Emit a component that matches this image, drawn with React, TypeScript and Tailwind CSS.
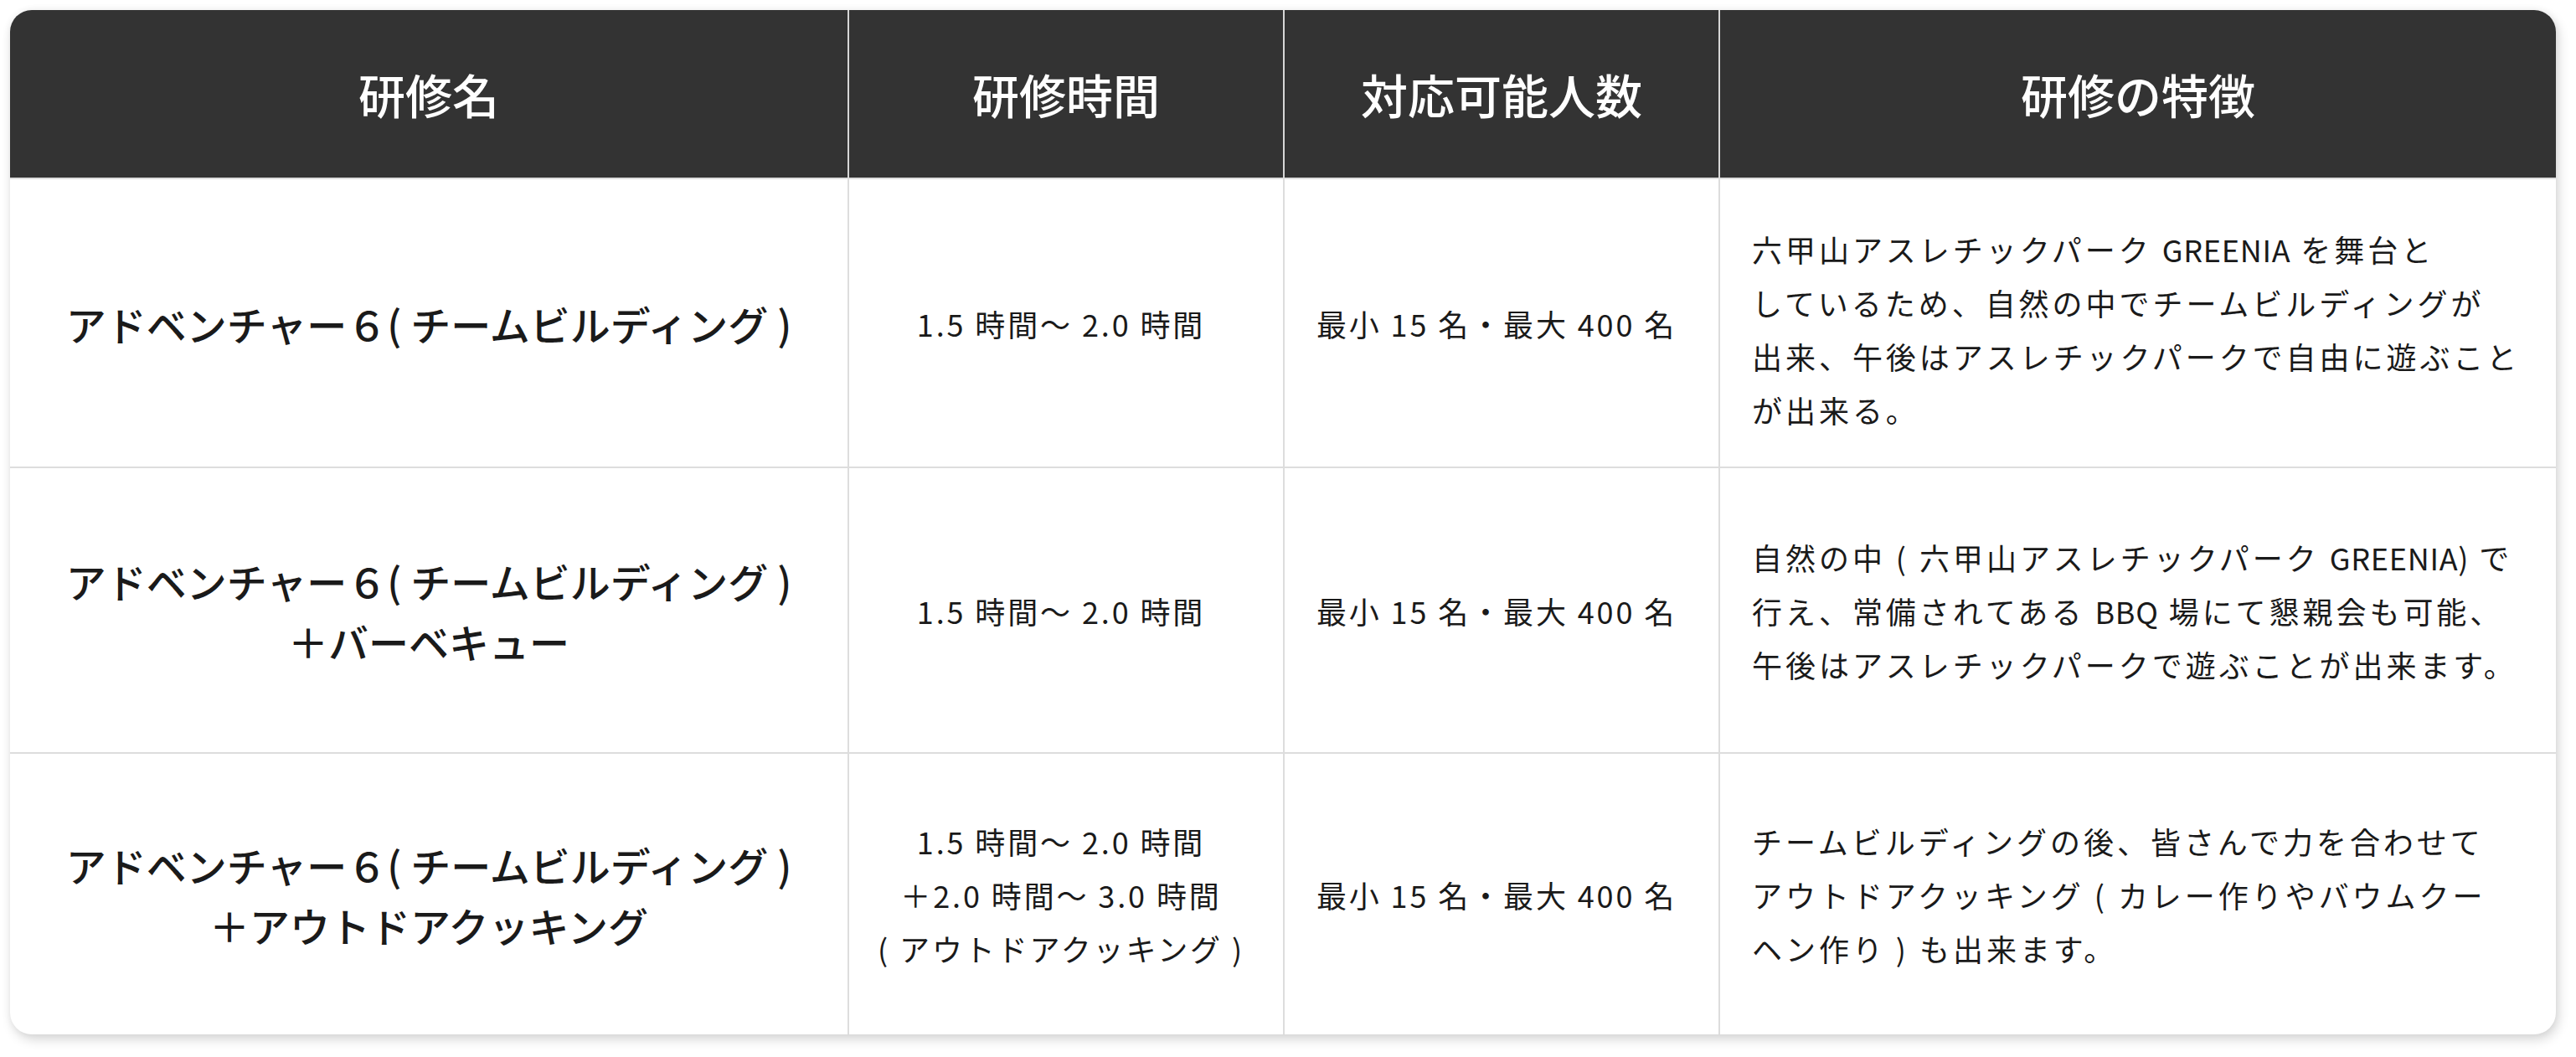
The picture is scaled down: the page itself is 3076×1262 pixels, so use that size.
import React from "react";

type Row = {
  name: string[];
  time: string[];
  capacity: string;
  feature: React.ReactNode[];
  height: string;
  featurePad?: string;
};

// 英字部分は字間を詰める
function L({ children }: { children: React.ReactNode }) {
  return <span className="tracking-[0.02em]">{children}</span>;
}

const rows: Row[] = [
  {
    name: ["アドベンチャー６( チームビルディング )"],
    time: ["1.5 時間〜 2.0 時間"],
    capacity: "最小 15 名・最大 400 名",
    feature: [
      <>
        六甲山アスレチックパーク <L>GREENIA</L> を舞台と
      </>,
      "しているため、自然の中でチームビルディングが",
      "出来、午後はアスレチックパークで自由に遊ぶこと",
      "が出来る。",
    ],
    height: "h-[345px]",
    featurePad: "pt-[14px]",
  },
  {
    name: ["アドベンチャー６( チームビルディング )", "＋バーベキュー"],
    time: ["1.5 時間〜 2.0 時間"],
    capacity: "最小 15 名・最大 400 名",
    feature: [
      <>
        自然の中 ( 六甲山アスレチックパーク <L>GREENIA)</L> で
      </>,
      <>
        行え、常備されてある <L>BBQ</L> 場にて懇親会も可能、
      </>,
      "午後はアスレチックパークで遊ぶことが出来ます。",
    ],
    height: "h-[341px]",
  },
  {
    name: ["アドベンチャー６( チームビルディング )", "＋アウトドアクッキング"],
    time: ["1.5 時間〜 2.0 時間", "＋2.0 時間〜 3.0 時間", "( アウトドアクッキング )"],
    capacity: "最小 15 名・最大 400 名",
    feature: [
      "チームビルディングの後、皆さんで力を合わせて",
      "アウトドアクッキング ( カレー作りやバウムクー",
      "ヘン作り ) も出来ます。",
    ],
    height: "h-[337px]",
  },
];

const headers = ["研修名", "研修時間", "対応可能人数", "研修の特徴"];

function Lines({ lines }: { lines: React.ReactNode[] }) {
  return (
    <>
      {lines.map((l, i) => (
        <span key={i} className="block whitespace-nowrap">
          {l}
        </span>
      ))}
    </>
  );
}

export default function App() {
  return (
    <div className="min-h-screen bg-white pl-[12px] pt-[12px] font-['Noto_Sans_CJK_JP','Noto_Sans',sans-serif] text-[#1a1a1a]">
      <div className="w-[3040px] overflow-hidden rounded-[26px] bg-white shadow-[3px_6px_14px_rgba(0,0,0,0.16),0_0_10px_rgba(0,0,0,0.05)]">
        {/* ヘッダー */}
        <div className="grid h-[200px] grid-cols-[1000px_520px_520px_1000px] bg-[#333333] text-white">
          {headers.map((h, i) => (
            <div
              key={h}
              className={
                "flex items-center justify-center text-[56px] font-medium " +
                (i > 0 ? "border-l-2 border-[#d6d6d6]" : "")
              }
            >
              {h}
            </div>
          ))}
        </div>

        {rows.map((r, idx) => (
          <div
            key={idx}
            className={
              "grid grid-cols-[1000px_520px_520px_1000px] border-t-2 border-[#dddddd] " +
              r.height
            }
          >
            <div className="flex items-center justify-center text-center text-[48px] font-medium leading-[72px]">
              <div>
                <Lines lines={r.name} />
              </div>
            </div>
            <div className="flex items-center justify-center border-l-2 border-[#dddddd] pr-[12px] text-center text-[36px] leading-[64px] tracking-[0.08em]">
              <div>
                <Lines lines={r.time} />
              </div>
            </div>
            <div className="flex items-center justify-center border-l-2 border-[#dddddd] pr-[12px] text-center text-[36px] leading-[64px] tracking-[0.08em]">
              {r.capacity}
            </div>
            <div
              className={
                "flex items-center border-l-2 border-[#dddddd] pl-[38px] text-[36px] leading-[64px] tracking-[0.11em] " +
                (r.featurePad ?? "")
              }
            >
              <div>
                <Lines lines={r.feature} />
              </div>
            </div>
          </div>
        ))}
      </div>
    </div>
  );
}
